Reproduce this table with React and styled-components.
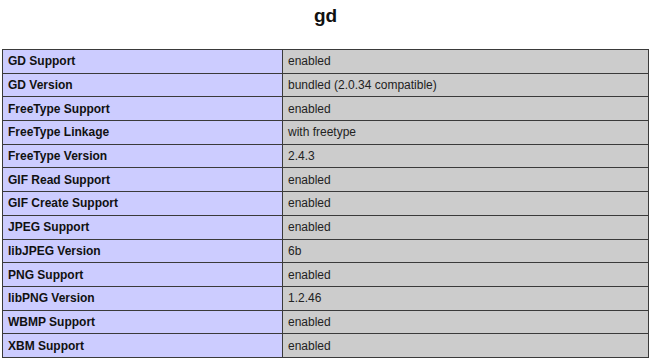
import styled, { createGlobalStyle } from "styled-components";

const rows = [
  ["GD Support", "enabled"],
  ["GD Version", "bundled (2.0.34 compatible)"],
  ["FreeType Support", "enabled"],
  ["FreeType Linkage", "with freetype"],
  ["FreeType Version", "2.4.3"],
  ["GIF Read Support", "enabled"],
  ["GIF Create Support", "enabled"],
  ["JPEG Support", "enabled"],
  ["libJPEG Version", "6b"],
  ["PNG Support", "enabled"],
  ["libPNG Version", "1.2.46"],
  ["WBMP Support", "enabled"],
  ["XBM Support", "enabled"],
];

export default function App() {
  return (
    <>
      <GlobalStyle />
      <Page>
        <Title>gd</Title>
        <Table>
          <tbody>
            {rows.map(([key, value]) => (
              <tr key={key}>
                <KeyCell>{key}</KeyCell>
                <ValueCell>{value}</ValueCell>
              </tr>
            ))}
          </tbody>
        </Table>
      </Page>
    </>
  );
}

const GlobalStyle = createGlobalStyle`
  body {
    margin: 0;
    background: #fff;
    font-family: "Liberation Sans", Arial, sans-serif;
  }
`;

const Page = styled.div`
  width: 650px;
  padding: 0 1px 0 2px;
  box-sizing: border-box;
`;

const Title = styled.h2`
  margin: 0;
  height: 49px;
  padding-top: 5px;
  box-sizing: border-box;
  text-align: center;
  font-size: 19px;
  font-weight: bold;
  color: #111;
`;

const Table = styled.table`
  width: 100%;
  border-collapse: collapse;
  table-layout: fixed;
  font-size: 12px;

  td {
    border: 1px solid #3a3a3a;
    height: 22.7px;
    padding: 0 5px;
    vertical-align: middle;
    line-height: 14px;
  }
`;

const KeyCell = styled.td`
  width: 269px;
  background: #ccccff;
  font-weight: bold;
  color: #111;
`;

const ValueCell = styled.td`
  background: #cccccc;
  color: #222;
`;
